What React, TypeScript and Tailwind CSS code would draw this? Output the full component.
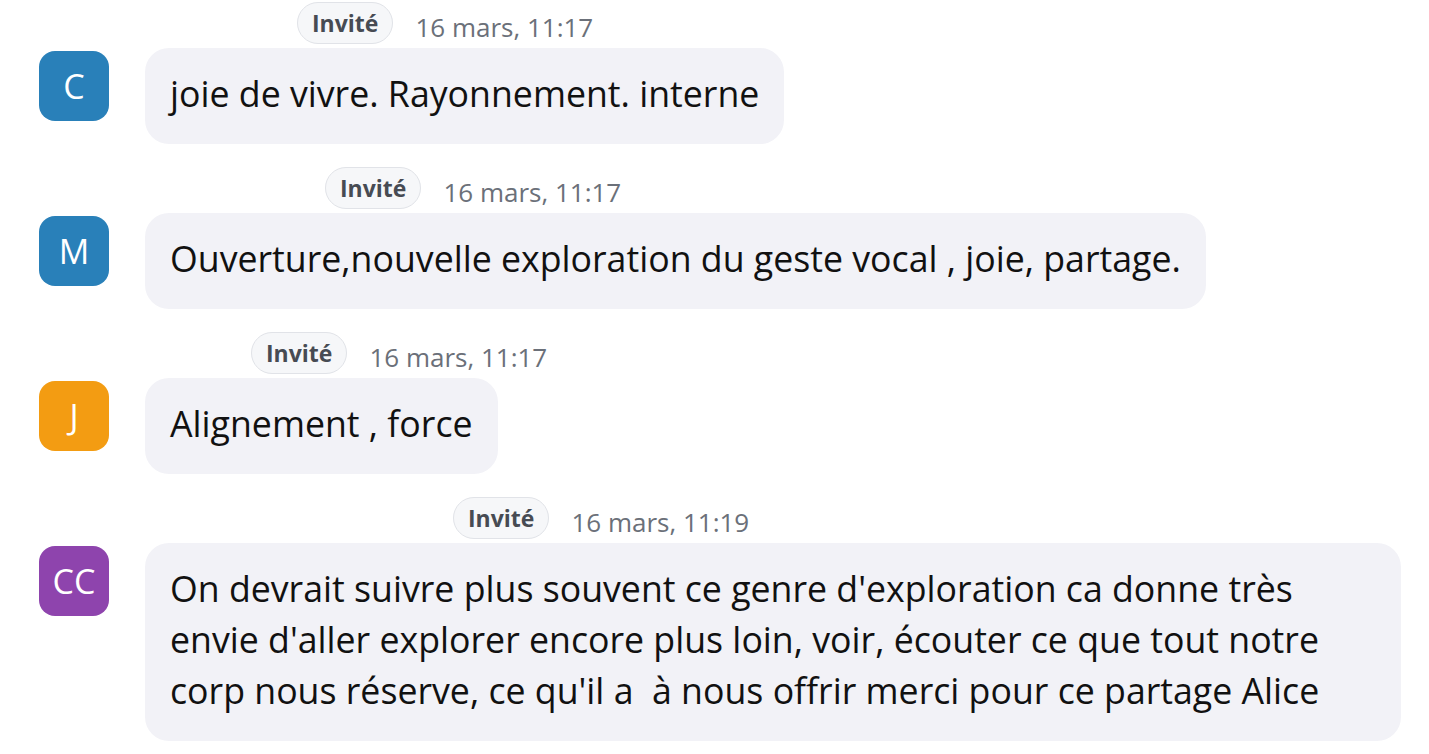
const messages = [
  { initials: 'C', color: 'bg-[#2980b9]', nameWidth: 'w-[125px]', time: '16 mars, 11:17', lines: ['joie de vivre. Rayonnement. interne'] },
  { initials: 'M', color: 'bg-[#2980b9]', nameWidth: 'w-[153px]', time: '16 mars, 11:17', lines: ['Ouverture,nouvelle exploration du geste vocal , joie, partage.'] },
  { initials: 'J', color: 'bg-[#f39c12]', nameWidth: 'w-[79px]', time: '16 mars, 11:17', lines: ['Alignement , force'] },
  {
    initials: 'CC',
    color: 'bg-[#8e44ad]',
    nameWidth: 'w-[281px]',
    time: '16 mars, 11:19',
    lines: [
      "On devrait suivre plus souvent ce genre d'exploration ca donne très",
      "envie d'aller explorer encore plus loin, voir, écouter ce que tout notre",
      "corp nous réserve, ce qu'il a\u00a0 à nous offrir merci pour ce partage Alice",
    ],
  },
]

function Message({ m }: { m: (typeof messages)[number] }) {
  const multi = m.lines.length > 1
  return (
    <div className="grid grid-cols-[70px_1fr] gap-x-[36px]">
      {/* header */}
      <div className="col-start-2 flex items-center gap-[12px] pl-[15px] h-[42px] mb-[4px]">
        <span className={`${m.nameWidth} h-[30px] shrink-0`} />
        <span className="h-[42px] px-[14px] flex items-center rounded-full border border-[#e1e3e8] bg-[#f6f7f9] text-[23px] font-bold text-[#474b53]">
          Invité
        </span>
        <span className="ml-[10px] pt-[8px] text-[26px] text-[#6b7079]">{m.time}</span>
      </div>
      {/* avatar */}
      <div
        className={`col-start-1 mt-[3px] h-[70px] w-[70px] rounded-[16px] ${m.color} flex items-center justify-center text-[34px] text-white`}
      >
        {m.initials}
      </div>
      {/* bubble */}
      <div
        className={`col-start-2 justify-self-start rounded-[24px] bg-[#f2f2f7] px-[25px] pt-[20px] pb-[25px] text-[35.7px] leading-[51px] text-[#111] whitespace-nowrap ${
          multi ? 'w-[1256px]' : ''
        }`}
      >
        {m.lines.map((l, i) => (
          <div key={i}>{l}</div>
        ))}
      </div>
    </div>
  )
}

export default function App() {
  return (
    <div
      className="min-h-[754px] w-full overflow-hidden bg-white pl-[39px] pt-[2px] flex flex-col gap-[23px]"
      style={{ fontFamily: '"Open Sans", "Noto Sans", sans-serif' }}
    >
      {messages.map((m, i) => (
        <Message key={i} m={m} />
      ))}
    </div>
  )
}
